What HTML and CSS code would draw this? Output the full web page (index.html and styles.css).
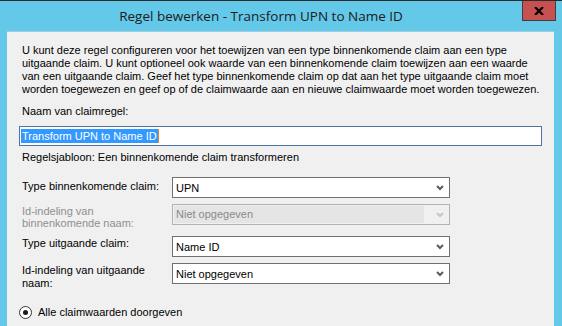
FILE: index.html
```html
<!DOCTYPE html>
<html lang="nl">
<head>
  <meta charset="UTF-8">
  <title>Regel bewerken - Transform UPN to Name ID</title>
  <link rel="stylesheet" href="styles.css">
</head>
<body>
  <div class="window">
    <!-- Title bar -->
    <div class="titlebar">
      <div class="title">Regel bewerken - Transform UPN to Name ID</div>
      <div class="close">
        <svg width="10" height="8" viewBox="0 0 10 8"><path d="M1 0 L9 8 M9 0 L1 8" stroke="#000" stroke-width="2.2"/></svg>
      </div>
    </div>

    <!-- Dialog body -->
    <div class="client">
      <p class="intro">U kunt deze regel configureren voor het toewijzen van een type binnenkomende claim aan een type uitgaande claim. U kunt optioneel ook waarde van een binnenkomende claim toewijzen aan een waarde van een uitgaande claim. Geef het type binnenkomende claim op dat aan het type uitgaande claim moet worden toegewezen en geef op of de claimwaarde aan en nieuwe claimwaarde moet worden toegewezen.</p>

      <div class="field-label">Naam van claimregel:</div>
      <div class="textbox"><span class="selected">Transform UPN to Name ID</span><span class="caret"></span></div>

      <div class="template">Regelsjabloon: Een binnenkomende claim transformeren</div>

      <div class="form">
        <div class="row first">
          <div class="label">Type binnenkomende claim:</div>
          <div class="combo">
            <span class="value">UPN</span>
            <svg class="arrow" width="8" height="6" viewBox="0 0 8 6"><path d="M1 1 L4 4 L7 1" fill="none" stroke="#5c5c5c" stroke-width="2"/></svg>
          </div>
        </div>
        <div class="row">
          <div class="label disabled">Id-indeling van<br>binnenkomende naam:</div>
          <div class="combo off">
            <span class="value">Niet opgegeven</span>
            <svg class="arrow" width="8" height="6" viewBox="0 0 8 6"><path d="M1 1 L4 4 L7 1" fill="none" stroke="#c4c4c4" stroke-width="2"/></svg>
          </div>
        </div>
        <div class="row wide">
          <div class="label">Type uitgaande claim:</div>
          <div class="combo">
            <span class="value">Name ID</span>
            <svg class="arrow" width="8" height="6" viewBox="0 0 8 6"><path d="M1 1 L4 4 L7 1" fill="none" stroke="#5c5c5c" stroke-width="2"/></svg>
          </div>
        </div>
        <div class="row">
          <div class="label">Id-indeling van uitgaande<br>naam:</div>
          <div class="combo">
            <span class="value">Niet opgegeven</span>
            <svg class="arrow" width="8" height="6" viewBox="0 0 8 6"><path d="M1 1 L4 4 L7 1" fill="none" stroke="#5c5c5c" stroke-width="2"/></svg>
          </div>
        </div>
      </div>

      <div class="radio">
        <span class="dot"></span>
        <span>Alle claimwaarden doorgeven</span>
      </div>
    </div>
  </div>
</body>
</html>
```

FILE: styles.css
```css
body {
  margin: 0;
  background: #64c9e9;
  font-family: 'Liberation Sans', Arial, sans-serif;
  font-size: 11px;
  color: #000;
  overflow: hidden;
}

.window {
  border-top: 1px solid #2b2b2b;
  height: 325px;
}

.titlebar {
  display: flex;
  align-items: flex-start;
  height: 30px;
}

.titlebar .title {
  flex: 1;
  text-align: center;
  font-family: 'Open Sans', sans-serif;
  font-size: 13.5px;
  line-height: 30px;
  color: #1b1b1b;
}

.titlebar .close {
  width: 32px;
  height: 19px;
  margin-right: 6px;
  background: #c75050;
  border: 1px solid #3f3f3f;
  border-top: none;
  display: flex;
  align-items: center;
  justify-content: center;
}

.client {
  margin: 0 8px 0 7px;
  background: #f0f0f0;
  border-top: 1px solid #9ccfe2;
  padding: 12px 12px 0 15px;
  height: 282px;
}

.intro {
  margin: 0;
  line-height: 13px;
}

.field-label {
  margin-top: 9px;
  line-height: 13px;
}

.textbox {
  margin: 8px 0 0 -3px;
  height: 18px;
  border: 1px solid #4e74a0;
  background: #fff;
  display: flex;
  align-items: center;
  padding-left: 1px;
}

.textbox .selected {
  background: #3399ff;
  color: #fff;
  line-height: 14px;
  padding: 0 1px;
}

.textbox .caret {
  width: 1px;
  height: 14px;
  background: #e0892c;
}

.template {
  margin-top: 5px;
  line-height: 13px;
}

.form {
  margin-top: 13px;
}

.row {
  display: grid;
  grid-template-columns: 150px 278px;
  grid-template-rows: 21px;
  margin-top: 6px;
}

.row.first {
  margin-top: 0;
}

.row.wide {
  margin-top: 11px;
}

.row .label {
  line-height: 13px;
  padding-top: 1px;
}

.row.first .label {
  padding-top: 3px;
}

.row .label.disabled {
  color: #8f8f8f;
  line-height: 12px;
}

.combo {
  height: 19px;
  border: 1px solid #707070;
  background: #fff;
  display: flex;
  align-items: center;
  padding-left: 3px;
}

.combo .value {
  flex: 1;
}

.combo .arrow {
  margin-right: 5px;
}

.combo.off {
  border-color: #b2b2b2;
  background: #f0f0f0;
  padding: 1px 0 1px 1px;
  height: 17px;
}

.combo.off .value {
  align-self: stretch;
  background: #e5e5e5;
  color: #8a8a8a;
  padding-left: 2px;
  line-height: 17px;
  margin-right: 12px;
}

.radio {
  margin-top: 22px;
  display: flex;
  align-items: center;
  gap: 6px;
  margin-left: -3px;
  line-height: 13px;
}

.radio .dot {
  width: 11px;
  height: 11px;
  border: 1px solid #333;
  border-radius: 50%;
  background: #fff;
  display: flex;
  align-items: center;
  justify-content: center;
}

.radio .dot::after {
  content: '';
  width: 5px;
  height: 5px;
  border-radius: 50%;
  background: #1a1a1a;
}
```
